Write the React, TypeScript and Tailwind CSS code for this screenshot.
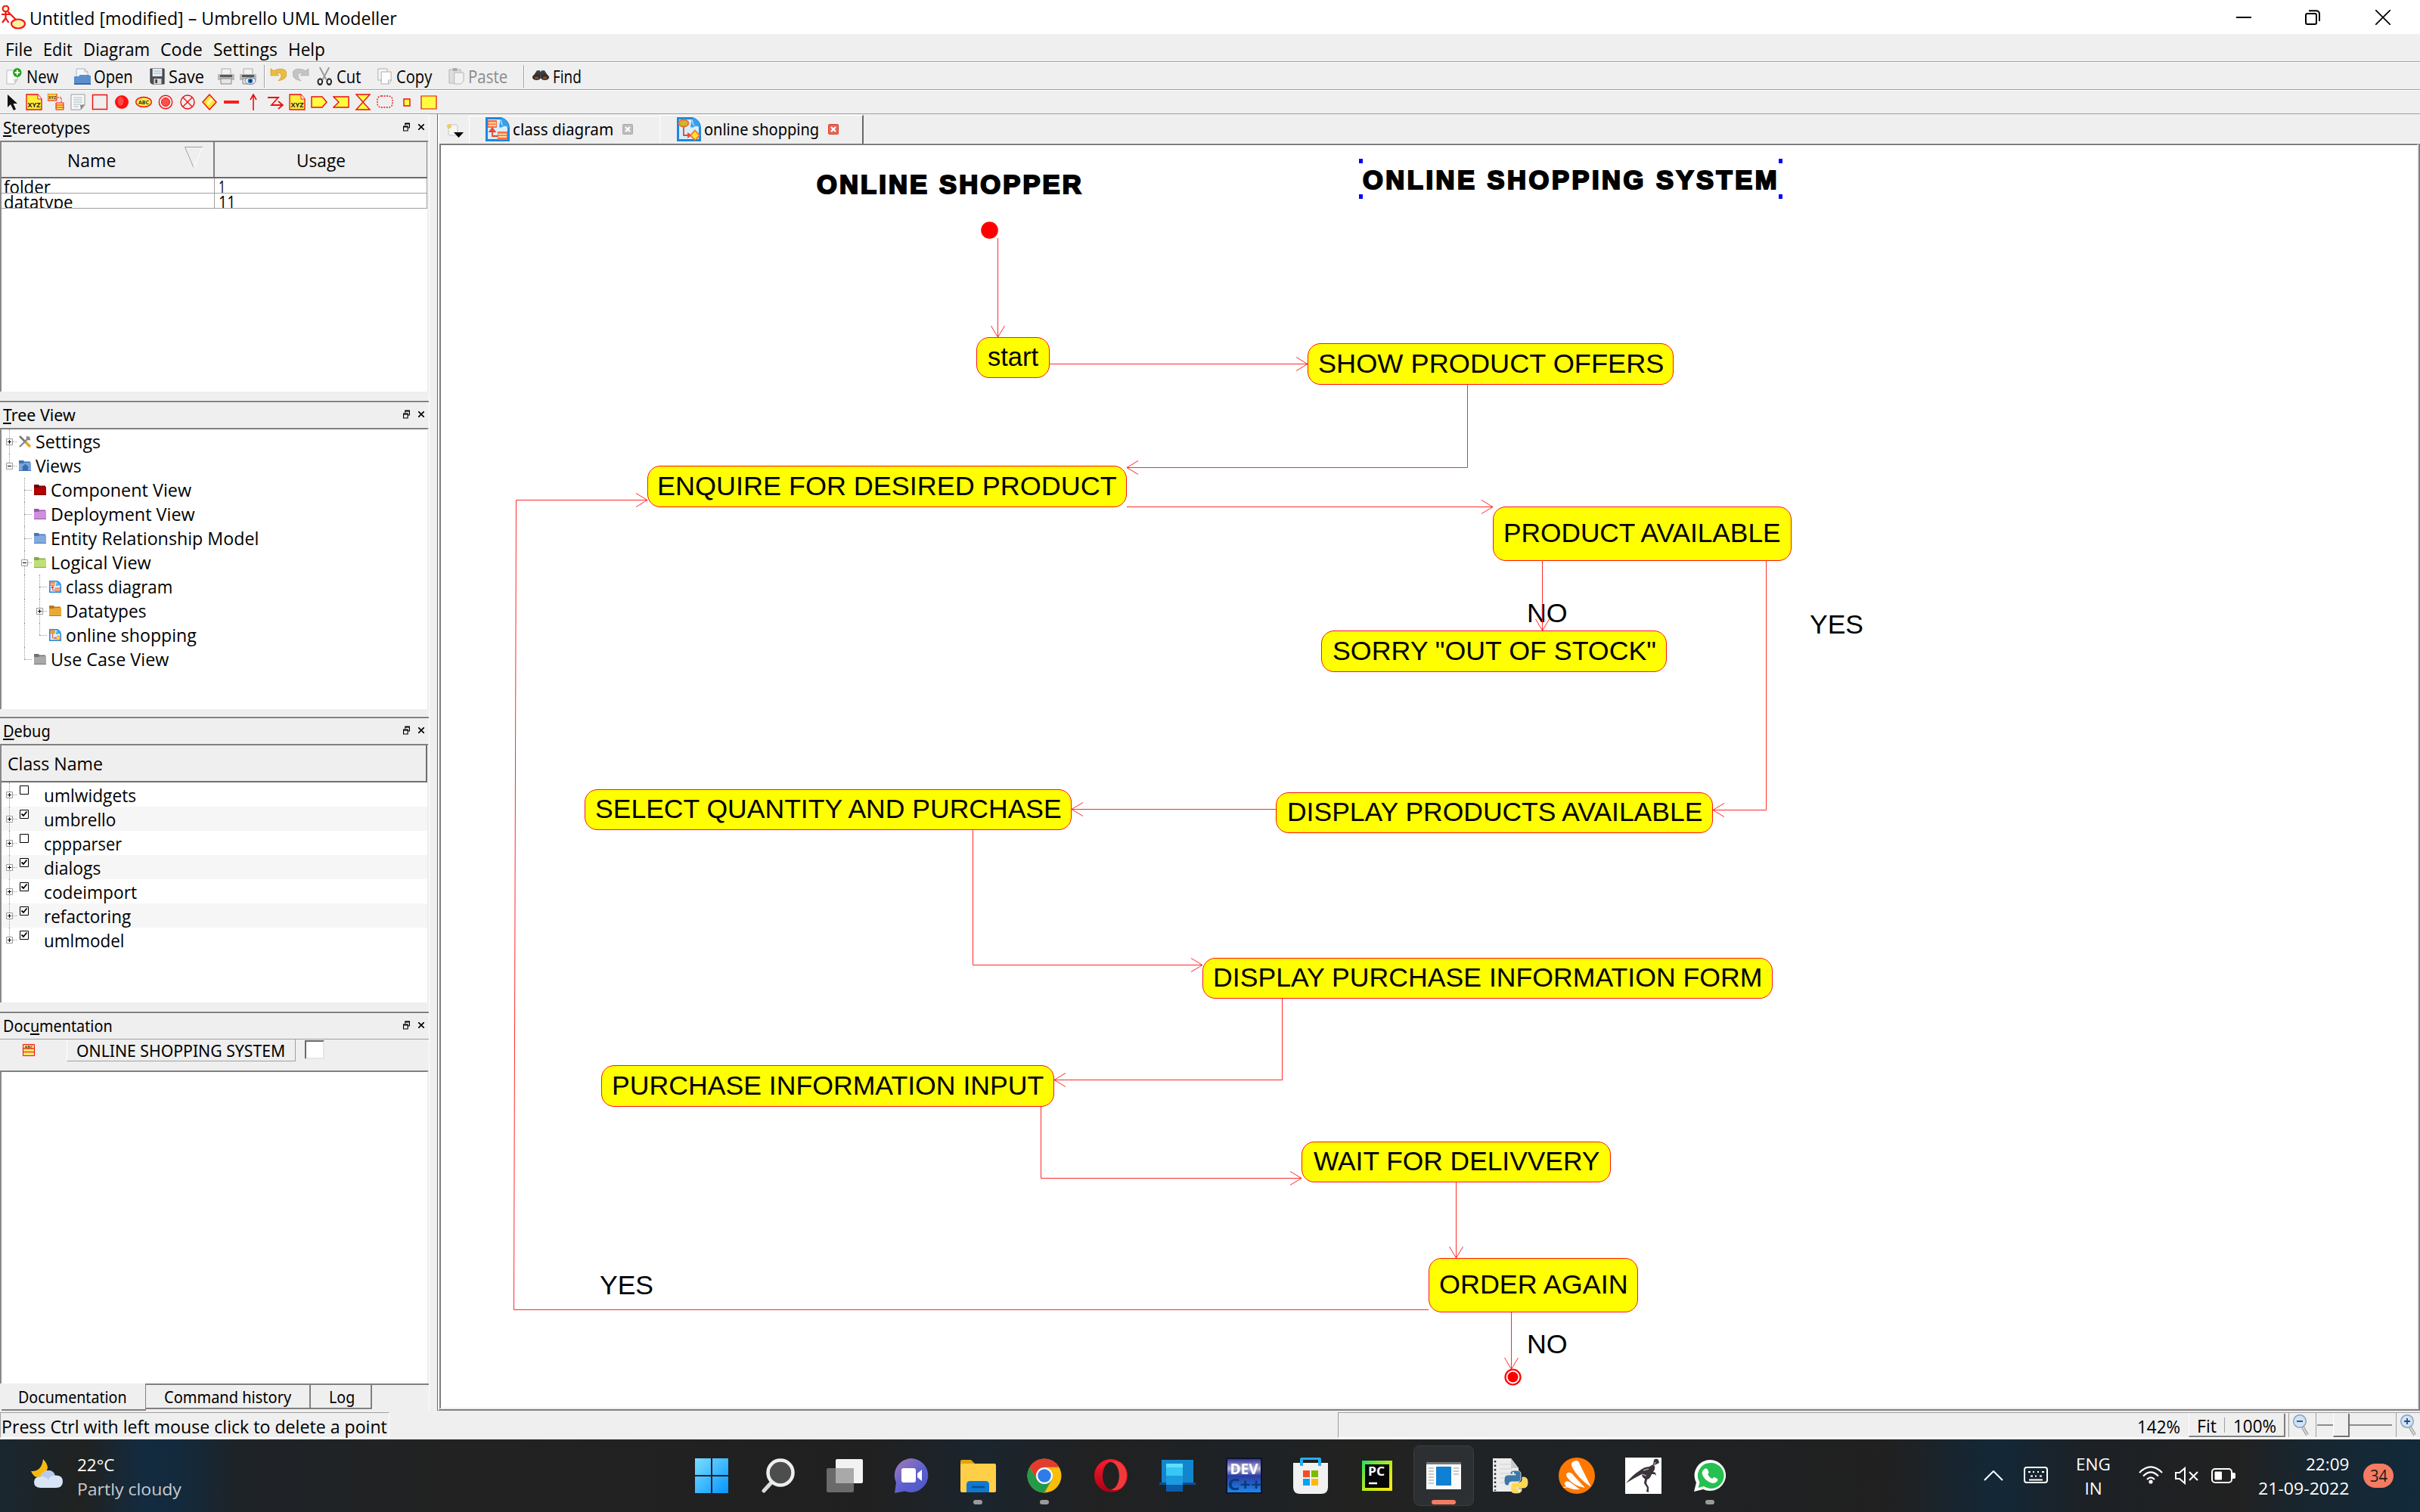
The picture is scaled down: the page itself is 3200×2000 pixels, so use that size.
import React, { useLayoutEffect, useRef, useState } from "react";

type Kids = { children?: React.ReactNode };

const UI = "font-['Open_Sans',sans-serif]";
const TAHOMA = "font-['Noto_Sans',sans-serif]";
const ARIAL = "font-['Liberation_Sans',Arial,sans-serif]";

/* A single line of text stretched or condensed to a given width. */
function T({ w, children, className = "", track = false }: { w: number; className?: string; track?: boolean } & Kids) {
  const ref = useRef<HTMLSpanElement>(null);
  const [fit, setFit] = useState<React.CSSProperties>({});
  useLayoutEffect(() => {
    const el = ref.current;
    if (!el) return;
    const natural = el.offsetWidth;
    const n = (el.textContent || "").length;
    setFit(track ? { letterSpacing: `${(w - natural) / (n - 1)}px` } : { transform: `scaleX(${w / natural})` });
  }, [w, track]);
  return (
    <span className={`relative top-px inline-block shrink-0 whitespace-nowrap ${className}`} style={{ width: w }}>
      <span ref={ref} className="inline-block origin-left" style={fit}>
        {children}
      </span>
    </span>
  );
}

function Svg({ vb = "0 0 22 22", className = "h-[22px] w-[22px]", children }: { vb?: string; className?: string } & Kids) {
  return (
    <svg viewBox={vb} preserveAspectRatio="none" className={`shrink-0 ${className}`} fill="none">
      {children}
    </svg>
  );
}

/* ---------- title, menu and tool bars ---------- */

function TitleBar() {
  return (
    <div className="flex h-[45px] items-center bg-white pl-[2px]">
      <Svg vb="0 0 32 32" className="h-8 w-8">
        <g stroke="#f01818" strokeWidth="2.2">
          <circle cx="5.5" cy="4.5" r="3.8" fill="#fff8c0" />
          <path d="M5.5 8.5v9M0 12h11M5.5 17L1 23M5.5 17l4 6M8 8l12 12" />
          <ellipse cx="22" cy="24.5" rx="9" ry="6" fill="#fff0a0" />
        </g>
      </Svg>
      <T w={486} className="ml-[5px] text-[24px]">Untitled [modified] – Umbrello UML Modeller</T>
      <div className="ml-auto mr-[39px] flex items-center">
        <div className="h-[2px] w-5 bg-black" />
        <Svg vb="0 0 20 20" className="ml-[71px] h-5 w-5">
          <rect x="1" y="5" width="14" height="14" rx="2" stroke="#000" strokeWidth="2" />
          <path d="M5 1.2h10a4 4 0 0 1 4 4V15" stroke="#000" strokeWidth="2" />
        </Svg>
        <Svg vb="0 0 20 20" className="ml-[73px] h-5 w-5">
          <path d="M0 0l20 20M20 0L0 20" stroke="#000" strokeWidth="1.7" />
        </Svg>
      </div>
    </div>
  );
}

function MenuBar() {
  return (
    <div className="flex h-[37px] items-center border-b border-[#a0a0a0] pl-[7px] pt-[2px] text-[24px]">
      <T w={36}>File</T>
      <T w={39} className="ml-[14px]">Edit</T>
      <T w={88} className="ml-[14px]">Diagram</T>
      <T w={56} className="ml-[14px]">Code</T>
      <T w={85} className="ml-[14px]">Settings</T>
      <T w={49} className="ml-[14px]">Help</T>
    </div>
  );
}

const Sep = ({ className = "" }) => <div className={`h-[30px] w-[2px] shrink-0 border-l border-r border-l-[#a0a0a0] border-r-white ${className}`} />;

function ToolBar() {
  return (
    <div className="flex h-[37px] items-center border-b border-t border-b-[#a0a0a0] border-t-white pl-2 text-[24px] [&>span]:top-0">
      <Svg className="h-[22px] w-[21px]">
        <path d="M1 3h15v12l-4 6H1z" fill="#fafafa" stroke="#bbb" />
        <path d="M16 14l-5 1 1 6z" fill="#ccc" />
        <circle cx="15.5" cy="6" r="6" fill="#22a31b" />
        <path d="M15.500 2.500v7M12 6h7" stroke="#fff" strokeWidth="2" />
      </Svg>
      <T w={42} className="ml-[6px]">New</T>
      <Svg className="ml-[21px] h-[22px] w-[22px]">
        <path d="M3 1h11l4 4v10H3z" fill="#f4f6fa" stroke="#a9b4c4" />
        <path d="M14 1v4h4" stroke="#a9b4c4" />
        <path d="M0 11h6l1.500-2H20v1h2v11H0z" fill="#5b8fcb" />
        <path d="M0 20h22v2H0z" fill="#3b6aa5" />
      </Svg>
      <T w={52} className="ml-1">Open</T>
      <Svg className="ml-[22px] h-[22px] w-5">
        <path d="M1 1h20v20H3l-2-2z" fill="#4c5057" stroke="#33363b" />
        <rect x="4" y="1" width="14" height="10" fill="#e4ecf2" />
        <path d="M6 4h10M6 7h10" stroke="#9fb0be" />
        <rect x="6" y="14" width="11" height="7" fill="#d9d9d9" />
        <rect x="8" y="15" width="3" height="5" fill="#444" />
      </Svg>
      <T w={47} className="ml-[5px]">Save</T>
      {[0, 1].map((i) => (
        <Svg key={i} className={i ? "ml-[7px] h-[22px] w-[22px]" : "ml-[18px] h-[22px] w-[22px]"}>
          <path d="M5 1h12v8H5z" fill="#f2f2f2" stroke="#aaa" />
          <path d="M0 9q0-1 1-1h20q1 0 1 1v7H0z" fill="#b9b9b9" />
          <path d="M3 10.500h16" stroke="#444" strokeWidth="2.400" />
          <path d="M4 14h14v7H4z" fill="#e6e6e6" stroke="#888" />
          {i === 1 && (
            <>
              <ellipse cx="14" cy="17" rx="7" ry="4.500" fill="#e9f1fa" stroke="#6b7f98" />
              <circle cx="14" cy="17" r="3.300" fill="#2f6db5" />
              <circle cx="14" cy="17" r="1.300" fill="#0a1c33" />
            </>
          )}
        </Svg>
      ))}
      <Sep className="ml-[10px]" />
      <Svg className="mb-1 ml-[6px] h-[18px] w-[22px]">
        <path d="M1 1v11h11L8 8.500q7-2 7 4 0 4-4 8 11-2 11-11 0-8-8-8-5 0-9 3z" fill="#ecbc3c" stroke="#c9991e" strokeWidth=".8" />
      </Svg>
      <Svg className="mb-1 ml-[8px] h-[18px] w-[22px]">
        <path d="M21 1v11H10l4-3.500q-7-2-7 4 0 4 4 8-11-2-11-11 0-8 8-8 5 0 9 3z" fill="#c4c4c4" stroke="#a9a9a9" strokeWidth=".8" />
      </Svg>
      <Svg className="ml-[10px] h-[24px] w-[21px]">
        <path d="M4 0l9 15M17 0L8 15" stroke="#9a9a9a" strokeWidth="2" />
        <ellipse cx="4.500" cy="17.500" rx="3" ry="3.500" stroke="#222" strokeWidth="2" />
        <ellipse cx="17" cy="17.500" rx="3" ry="3.500" stroke="#222" strokeWidth="2" />
      </Svg>
      <T w={32} className="ml-[5px]">Cut</T>
      <Svg className="ml-[22px] h-[22px] w-[19px]">
        <path d="M1 1h14v15H1z" fill="#f6f6f6" stroke="#aaa" />
        <path d="M6 5h15v12l-4 4H6z" fill="#fdfdfd" stroke="#aaa" />
        <path d="M21 16h-4v5" stroke="#aaa" />
      </Svg>
      <T w={47} className="ml-[6px]">Copy</T>
      <Svg className="ml-[22px] h-[22px] w-[21px]">
        <path d="M1 2h16v18H1z" fill="#dedede" stroke="#b5b5b5" />
        <path d="M6 0h6v4H6z" fill="#aaa" />
        <path d="M8 6h13v11l-4 4H8z" fill="#f2f2f2" stroke="#b5b5b5" />
      </Svg>
      <T w={52} className="ml-[5px] text-[#8b8b8b]">Paste</T>
      <Sep className="ml-[21px]" />
      <Svg className="mb-[2px] ml-[10px] h-[15px] w-[22px]">
        <path d="M1 13L6 2h4l1 3 1-3h4l5 11z" fill="#3c3c3c" />
        <circle cx="5.500" cy="15" r="5.500" fill="#2c2c2c" />
        <circle cx="16.500" cy="15" r="5.500" fill="#2c2c2c" />
        <circle cx="5.500" cy="16" r="2.800" fill="#8a4a2a" />
        <circle cx="16.500" cy="16" r="2.800" fill="#8a4a2a" />
      </Svg>
      <T w={38} className="ml-[5px]">Find</T>
    </div>
  );
}

const R = "#f00d0d";
const Xyz = () => (
  <>
    <path d="M1 1h15l5 6v14H1z" fill="#ffee3c" stroke={R} strokeWidth="1.300" />
    <path d="M16 1v6h5" fill="#fff" stroke={R} />
    <text x="11" y="18" textAnchor="middle" fontSize="9.500" fontWeight="700" fill="#222" textLength="17" lengthAdjust="spacingAndGlyphs" className={UI}>XYZ</text>
  </>
);

const umlTools: React.ReactNode[] = [
  <path d="M5 1v17l4-4 4 8 3-1.500L12.500 13H18z" fill="#111" />,
  <Xyz />,
  <>
    <path d="M0 0h12v9H0z" fill="#ffe52e" stroke={R} />
    <text x="6" y="7" textAnchor="middle" fontSize="6" fontWeight="700" fill="#333" textLength="10" lengthAdjust="spacingAndGlyphs">XYZ</text>
    <path d="M13 5h5v7" stroke={R} strokeDasharray="2 1" />
    <path d="M11 12h10v9H11zM11 15h10M11 18h10" fill="#ffee60" stroke={R} />
  </>,
  <>
    <path d="M2 1h18v14l-5 6H2z" fill="#fafafa" stroke="#999" />
    <path d="M5 5h12M5 8h12M5 11h12M5 14h10M5 17h7" stroke="#a8b2bd" />
    <path d="M20 14l-6 1 1 6z" fill="#888" />
  </>,
  <path d="M1.500 1.500h19v19h-19z" stroke={R} strokeWidth="1.400" />,
  <>
    <circle cx="11" cy="11" r="9" fill="#ff1010" />
    <ellipse cx="9.500" cy="10" rx="4" ry="6" fill="#ff8080" opacity=".5" />
  </>,
  <>
    <ellipse cx="11" cy="11" rx="10.300" ry="6.500" fill="#ffee40" stroke={R} strokeWidth="1.300" />
    <text x="11" y="14" textAnchor="middle" fontSize="7.500" fontWeight="700" fill="#333" textLength="14" lengthAdjust="spacingAndGlyphs">ABC</text>
  </>,
  <>
    <circle cx="11" cy="11" r="8.700" stroke={R} strokeWidth="1.400" />
    <circle cx="11" cy="11" r="5.500" fill="#ff5050" stroke={R} />
  </>,
  <>
    <circle cx="11" cy="11" r="9" stroke={R} strokeWidth="1.400" />
    <path d="M5 5l12 12M17 5L5 17" stroke={R} strokeWidth="1.400" />
  </>,
  <>
    <path d="M11 1l9 10-9 10-9-10z" fill="#ffe52e" stroke={R} strokeWidth="1.400" />
    <path d="M7 12l6-7 3 3-6 7z" fill="#fff8b0" />
  </>,
  <path d="M1 9h20v4H1z" fill="#ff1c1c" />,
  <path d="M11 22V2M7 8l4-7 4 7" stroke={R} strokeWidth="1.600" />,
  <path d="M1 5h14L6 15h14M15 10l6 5-6 5" stroke={R} strokeWidth="1.800" />,
  <Xyz />,
  <path d="M1 4h14l6 7-6 7H1z" fill="#ffff40" stroke={R} strokeWidth="1.400" />,
  <path d="M1 4h20v14H1l7-7z" fill="#ffff40" stroke={R} strokeWidth="1.400" />,
  <path d="M2 1h18L2 21h18z" fill="#ffff40" stroke={R} strokeWidth="1.400" />,
  <rect x="1" y="3" width="20" height="15" rx="5" stroke={R} strokeWidth="1.300" strokeDasharray="2 1.500" />,
  <path d="M7 7h8v9H7z" fill="#ffff40" stroke={R} strokeWidth="1.400" />,
  <path d="M1 3h20v17H1z" fill="#ffff40" stroke={R} strokeWidth="1.200" />,
];

function UmlToolBar() {
  return (
    <div className="flex h-8 items-center border-b border-t border-b-[#a0a0a0] border-t-white pl-[1px]">
      {umlTools.map((icon, i) => (
        <div key={i} className="flex w-[29px] justify-center">
          <Svg>{icon}</Svg>
        </div>
      ))}
    </div>
  );
}

/* ---------- left docks ---------- */

function DockTitle({ w, children }: { w: number } & Kids) {
  return (
    <div className={`flex h-[34px] items-center pl-1 pr-[6px] text-[22.500px] [&>span]:top-0 ${TAHOMA}`}>
      <T w={w}>{children}</T>
      <Svg vb="0 0 8 12" className="mb-[3px] ml-auto h-3 w-[9px]">
        <path d="M2.500 4V1h5v6H6M.5 5h5v6h-5zM.5 6h5M2.500 2h5" stroke="#000" />
      </Svg>
      <Svg vb="0 0 8 8" className="mb-[3px] ml-[11px] h-2 w-2">
        <path d="M0 0l8 8M8 0L0 8" stroke="#000" strokeWidth="1.600" />
      </Svg>
    </div>
  );
}

const frame = "border-l-2 border-t-2 border-r-2 border-l-[#8a8a8a] border-t-[#808080] border-r-[#ececec]";
const dockGap = "h-3 bg-[#efefef]";
const dockEdge = "h-[2px] border-b border-t border-t-[#a0a0a0] border-b-[#696969]";

function Stereotypes() {
  return (
    <>
      <DockTitle w={115}><u className="underline-offset-2">S</u>tereotypes</DockTitle>
      <div className={`h-[332px] bg-white text-[23px] ${frame} ${UI}`}>
        <div className="flex h-[48px] items-center border-b-2 border-[#6a6a6a] bg-[#efefef]">
          <div className="relative flex h-full w-[282px] items-center justify-center border-r-2 border-[#808080] pr-[42px]">
            <T w={64}>Name</T>
            <Svg vb="0 0 24 28" className="absolute right-[14px] top-[6px] h-7 w-6">
              <path d="M24 .5H.5L12 27.500" stroke="#a0a0a0" />
              <path d="M24 .5L12 27.500" stroke="#fff" />
            </Svg>
          </div>
          <div className="flex h-full flex-1 items-center justify-center border-r border-[#808080]">
            <T w={65}>Usage</T>
          </div>
        </div>
        {[["folder", 62, "1", 9], ["datatype", 92, "11", 22]].map(([a, aw, b, bw]) => (
          <div key={a as string} className="flex h-5 overflow-hidden border-b border-[#a0a0a0] leading-[20px]">
            <div className="h-5 w-[282px] overflow-hidden border-r border-[#a0a0a0] pl-[3px]"><T w={aw as number}>{a}</T></div>
            <div className="h-5 flex-1 overflow-hidden border-r border-[#a0a0a0] pl-[5px]"><T w={bw as number}>{b}</T></div>
          </div>
        ))}
      </div>
    </>
  );
}

const Expander = ({ open = false }) => (
  <Svg vb="0 0 9 9" className="relative h-[9px] w-[9px] bg-white">
    <path d="M.5.5h8v8h-8z" stroke="#9a9a9a" />
    <path d={open ? "M2 4.500h5" : "M2 4.500h5M4.500 2v5"} stroke="#000" />
  </Svg>
);

const Folder = ({ c, d, home = false }: { c: string; d: string; home?: boolean }) => (
  <Svg vb="0 0 16 16" className="h-4 w-4">
    <path d="M0 1h6l1 1.500h8V6H0z" fill={d} />
    <path d="M0 5h6l1-1h9v11H0z" fill={c} />
    <path d="M0 14.500h16" stroke={d} />
    {home && <path d="M8.500 5.500l-5 5H5v4h7v-4h1.500z" fill="#3a6dae" />}
  </Svg>
);

const DiagramDoc = ({ activity = false, className = "h-4 w-4" }) => (
  <Svg vb="0 0 32 32" className={className}>
    <path d="M1.500 1.500h19q9 3 10 12v17h-29z" fill="#d6effc" stroke="#1e88e0" strokeWidth="3" />
    <path d="M20 1q0 11 4 11-4 3-6 1M20 1q10 2 11 13-4-3-8-2z" fill="#3aa0ea" />
    {activity ? (
      <>
        <ellipse cx="9" cy="8" rx="6.500" ry="4.500" fill="#c9b92c" stroke="#f07030" strokeWidth="1.800" />
        <path d="M9 12.500V24h8M14 21l4 3-4 3" stroke="#f04030" strokeWidth="1.800" />
        <path d="M24 17.500l6 6.500-6 6.500-6-6.500z" fill="#ffe030" stroke="#f07030" strokeWidth="1.800" />
      </>
    ) : (
      <>
        <path d="M3 4h12v10H3zM16 19h13v11H16z" fill="#f2704a" />
        <path d="M4 7.500h10M4 11h10M17 22.500h11M17 26h11" stroke="#ffd9a0" strokeWidth="1.800" />
        <path d="M9 14v11h7M5.500 19L9 14.500l3.500 4.500z" stroke="#f04030" strokeWidth="1.800" />
      </>
    )}
  </Svg>
);

const Tools = () => (
  <Svg vb="0 0 16 16" className="h-4 w-4">
    <path d="M1 1l9 9" stroke="#777" strokeWidth="2.600" />
    <path d="M9 9l6 6" stroke="#e2a81c" strokeWidth="3.400" />
    <path d="M14 2L1 15M11 1v4h4" stroke="#8a8a8a" strokeWidth="2.400" />
  </Svg>
);

type Node = { label: string; w: number; level: number; icon: React.ReactNode; exp?: "open" | "closed"; guides: string[] };
const tree: Node[] = [
  { label: "Settings", w: 86, level: 0, icon: <Tools />, exp: "closed", guides: ["full"] },
  { label: "Views", w: 61, level: 0, icon: <Folder c="#7aa5dc" d="#3f74b5" home />, exp: "open", guides: ["end"] },
  { label: "Component View", w: 186, level: 1, icon: <Folder c="#b40000" d="#6d0000" />, guides: ["", "full"] },
  { label: "Deployment View", w: 191, level: 1, icon: <Folder c="#cf8fdc" d="#9a58a8" />, guides: ["", "full"] },
  { label: "Entity Relationship Model", w: 275, level: 1, icon: <Folder c="#82aadf" d="#4678b6" />, guides: ["", "full"] },
  { label: "Logical View", w: 133, level: 1, icon: <Folder c="#bfe075" d="#84a845" />, exp: "open", guides: ["", "full"] },
  { label: "class diagram", w: 141, level: 2, icon: <DiagramDoc />, guides: ["", "full", "full"] },
  { label: "Datatypes", w: 106, level: 2, icon: <Folder c="#e9aa35" d="#b87a18" />, exp: "closed", guides: ["", "full", "full"] },
  { label: "online shopping", w: 173, level: 2, icon: <DiagramDoc activity />, guides: ["", "full", "end"] },
  { label: "Use Case View", w: 156, level: 1, icon: <Folder c="#a9a9a9" d="#707070" />, guides: ["", "end"] },
];

function Guide({ kind, last, exp }: { kind: string; last: boolean; exp?: string }) {
  return (
    <div className="relative flex h-full w-5 shrink-0 items-center justify-center">
      {kind && <div className={`absolute left-[10px] top-0 border-l border-dotted border-[#999] ${kind === "end" ? "h-4" : "h-full"}`} />}
      {last && <div className="absolute left-[10px] top-4 w-[10px] border-t border-dotted border-[#999]" />}
      {last && exp && <Expander open={exp === "open"} />}
    </div>
  );
}

function TreeView() {
  return (
    <>
      <DockTitle w={96}><u className="underline-offset-2">T</u>ree View</DockTitle>
      <div className={`h-[372px] bg-white text-[23.500px] ${frame} ${UI}`}>
        {tree.map((n) => (
          <div key={n.label} className="flex h-8 items-center">
            {n.guides.map((g, i) => (
              <Guide key={i} kind={g} last={i === n.level} exp={n.exp} />
            ))}
            <div className="ml-[3px] flex h-4">{n.icon}</div>
            <T w={n.w} className="ml-[6px]">{n.label}</T>
          </div>
        ))}
      </div>
    </>
  );
}

const classes: [string, number, boolean][] = [
  ["umlwidgets", 122, false],
  ["umbrello", 95, true],
  ["cppparser", 103, false],
  ["dialogs", 75, true],
  ["codeimport", 123, true],
  ["refactoring", 115, true],
  ["umlmodel", 107, true],
];

function Debug() {
  return (
    <>
      <DockTitle w={63}><u className="underline-offset-2">D</u>ebug</DockTitle>
      <div className={`h-[342px] bg-white text-[23.500px] ${frame} ${UI}`}>
        <div className="flex h-[49px] items-center border-b-2 border-r-2 border-[#707070] bg-[#efefef] pl-2 pt-px">
          <T w={126}>Class Name</T>
        </div>
        {classes.map(([name, w, on], i) => (
          <div key={name} className={`flex h-8 items-center ${i % 2 ? "bg-[#f6f6f6]" : ""}`}>
            <Guide kind={i === classes.length - 1 ? "end" : "full"} last exp="closed" />
            <Svg vb="0 0 12 12" className="mb-3 ml-1 h-3 w-3 bg-white">
              <path d="M.5.5h11v11H.5z" stroke="#000" />
              {on && <path d="M2.500 5.500L5 8l4.500-5.500" stroke="#000" strokeWidth="1.800" />}
            </Svg>
            <T w={w} className="ml-5 mt-[2px]">{name}</T>
          </div>
        ))}
      </div>
    </>
  );
}

function Documentation() {
  return (
    <>
      <DockTitle w={145}>Doc<u className="underline-offset-2">u</u>mentation</DockTitle>
      <div className={`flex h-[42px] items-start border-t border-[#a0a0a0] pl-[30px] text-[22.500px] ${TAHOMA}`}>
        <Svg vb="0 0 16 16" className="mt-[6px] h-4 w-4">
          <path d="M.5.5h15v15H.5z" fill="#ffe36a" stroke={R} />
          <text x="8" y="5.500" fontSize="5.500" textAnchor="middle" fontWeight="700" fill="#444">ABC</text>
          <path d="M0 6h16M0 10.500h16" stroke={R} />
        </Svg>
        <div className="ml-[42px] flex h-[29px] w-[303px] items-center border-b border-l border-r border-[#a0a0a0] border-l-white pl-[12px]">
          <T w={276}>ONLINE SHOPPING SYSTEM</T>
        </div>
        <div className="ml-3 mt-[1px] h-[25px] w-[26px] border-2 border-b-[#e6e6e6] border-l-[#696969] border-r-[#e6e6e6] border-t-[#696969] bg-white" />
      </div>
      <div className={`h-[414px] bg-white ${frame}`} />
      <div className={`flex h-[36px] items-start text-[22.500px] ${TAHOMA}`}>
        <div className="ml-[2px] flex h-[36px] w-[191px] items-center border-b-2 border-r border-[#808080] pl-[22px]">
          <T w={144}>Documentation</T>
        </div>
        <div className="flex h-[34px] w-[218px] items-center border-b-2 border-r-2 border-t-2 border-[#808080] pl-[24px]">
          <T w={168}>Command history</T>
        </div>
        <div className="flex h-[34px] w-[81px] items-center border-b-2 border-r-2 border-t-2 border-[#808080] pl-[24px]">
          <T w={34}>Log</T>
        </div>
        <div className="h-[2px] flex-1 bg-[#808080]" />
      </div>
    </>
  );
}

/* ---------- diagram ---------- */

type Box = [string, number, number, number, number, number];
const boxes: Box[] = [
  ["start", 1291, 446, 97, 54, 67],
  ["SHOW PRODUCT OFFERS", 1729, 454, 484, 55, 457],
  ["ENQUIRE FOR DESIRED PRODUCT", 856, 616, 634, 55, 608],
  ["PRODUCT AVAILABLE", 1974, 670, 395, 72, 367],
  ['SORRY "OUT OF STOCK"', 1747, 834, 457, 55, 428],
  ["SELECT QUANTITY AND PURCHASE", 773, 1044, 644, 54, 617],
  ["DISPLAY PRODUCTS AVAILABLE", 1687, 1048, 578, 54, 549],
  ["DISPLAY PURCHASE INFORMATION FORM", 1590, 1267, 754, 54, 727],
  ["PURCHASE INFORMATION INPUT", 795, 1409, 599, 55, 571],
  ["WAIT FOR DELIVVERY", 1721, 1510, 409, 54, 378],
  ["ORDER AGAIN", 1889, 1664, 277, 72, 250],
];

const labels: [string, number, number, number][] = [
  ["NO", 2019, 810, 54],
  ["YES", 2393, 825, 71],
  ["YES", 793, 1699, 71],
  ["NO", 2019, 1777, 54],
];

const edges = [
  "M1319.500 315V446", "M1387 481.500H1729", "M1940.500 509V618.500H1490", "M1490 670.500H1974",
  "M2039.500 741V834", "M2335.500 741V1071.500H2265", "M1687 1070.500H1417", "M1286.500 1098V1276.500H1590",
  "M1695.500 1321V1428.500H1394", "M1376.500 1464V1558.500H1721", "M1925.500 1564V1664",
  "M1998.500 1736V1811", "M1889 1732.500H679.500L682.500 661.500H856",
];
const heads: [number, number, string][] = [
  [1319.5, 446, "d"], [1729, 481.5, "r"], [1490, 618.5, "l"], [1974, 670.5, "r"], [2039.5, 834, "d"],
  [2265, 1071.5, "l"], [1417, 1070.5, "l"], [1590, 1276.5, "r"], [1394, 1428.5, "l"], [1721, 1558.5, "r"],
  [1925.5, 1664, "d"], [1998.5, 1811, "d"], [856, 661.5, "r"],
];
const headPath: Record<string, string> = { d: "l-9-15m9 15l9-15", r: "l-15-9m15 9l-15 9", l: "l15-9m-15 9l15 9" };

function Diagram() {
  return (
    <div className={`absolute -left-[583px] -top-[192px] h-[2000px] w-[3200px] text-[34.500px] leading-[40px] ${ARIAL}`}>
      {boxes.map(([text, x, y, w, h, tw]) => (
        <div
          key={text}
          className="absolute flex items-center justify-center rounded-[17px] border border-[#ff1414] bg-[#ffff00] pb-1"
          style={{ left: x, top: y, width: w, height: h }}
        >
          <T w={tw}>{text}</T>
        </div>
      ))}
      {labels.map(([text, x, y, w]) => (
        <div key={text + x + y} className="absolute flex -translate-y-1/2" style={{ left: x, top: y }}>
          <T w={w}>{text}</T>
        </div>
      ))}
      <div className="absolute left-[1080px] top-[223px] flex font-bold [-webkit-text-stroke:2.200px_#000]"><T w={350} track>ONLINE SHOPPER</T></div>
      <div className="absolute left-[1802px] top-[217px] flex font-bold [-webkit-text-stroke:2.200px_#000]"><T w={547} track>ONLINE SHOPPING SYSTEM</T></div>
      <svg className="absolute inset-0" width="3200" height="2000" fill="none" stroke="#ff2a2a" strokeWidth="1">
        {edges.map((d) => <path key={d} d={d} />)}
        {heads.map(([x, y, k]) => <path key={`${x}-${y}`} d={`M${x} ${y}${headPath[k]}`} />)}
        <circle cx="1308.500" cy="304.500" r="11.300" fill="#ff0000" stroke="none" />
        <circle cx="2000.500" cy="1821.500" r="10" stroke="#ff0000" strokeWidth="2.200" />
        <circle cx="2000.500" cy="1821.500" r="7" fill="#ff0000" stroke="none" />
        <path d="M1797 210h5v6h-5zM2352 210h5v6h-5zM1797 257h5v6h-5zM2352 257h5v6h-5z" fill="#0000ff" stroke="none" />
      </svg>
    </div>
  );
}

const CloseBox = ({ active = false, className = "" }) => (
  <Svg vb="0 0 14 14" className={`h-[14px] w-[14px] ${className}`}>
    <rect width="14" height="14" rx="2" fill={active ? "#d9442f" : "#a9a9a9"} />
    <rect x="1" y="1" width="12" height="12" rx="1" fill={active ? "#e2695a" : "#bdbdbd"} />
    <path d="M4 4l6 6M10 4l-6 6" stroke="#fff" strokeWidth="2.200" />
  </Svg>
);

function Editor() {
  return (
    <div className="flex min-w-0 flex-1 flex-col border-l border-[#696969]">
      <div className={`flex h-[39px] shrink-0 items-end border-l-2 border-white text-[22.500px] ${TAHOMA}`}>
        <Svg vb="0 0 24 20" className="mb-[7px] ml-[9px] h-5 w-6">
          <rect x="3" y="2" width="12" height="14" rx="2" fill="#f6f6f6" stroke="#c4c4c4" />
          <circle cx="4" cy="4" r="3" fill="#f0cc60" />
          <path d="M10 12h13l-6.500 7z" fill="#000" />
        </Svg>
        <div className="ml-[6px] flex h-[37px] w-[252px] items-center border-l border-t border-white pb-[2px] pl-[21px] [&>span]:top-0">
          <DiagramDoc className="h-8 w-8" />
          <T w={133} className="ml-1">class diagram</T>
          <CloseBox className="ml-3" />
        </div>
        <div className="flex h-[38px] w-[270px] items-center border-l border-r-2 border-t border-white border-r-[#696969] pb-[2px] pl-[22px] [&>span]:top-0">
          <DiagramDoc activity className="h-8 w-8" />
          <T w={152} className="ml-1">online shopping</T>
          <CloseBox active className="ml-3" />
        </div>
        <div className="h-[1px] flex-1 bg-white" />
      </div>
      <div className="flex min-h-0 flex-1 border-b-2 border-l-2 border-r-2 border-white border-b-[#808080] border-r-[#808080]">
        <div className="relative flex-1 overflow-hidden border-2 border-b-[#efefef] border-l-[#7c7c7c] border-r-[#efefef] border-t-[#7c7c7c] bg-white">
          <Diagram />
        </div>
      </div>
    </div>
  );
}

/* ---------- status bar ---------- */

const Zoom = ({ plus = false }) => (
  <Svg vb="0 0 24 28" className="h-7 w-6">
    <path d="M14 17l6 10" stroke="#8f8f8f" strokeWidth="4" />
    <path d="M14 17l6 10" stroke="#dedede" strokeWidth="2" />
    <circle cx="10" cy="9" r="8.300" fill="#cfe2f7" stroke="#8ea3bb" strokeWidth="1.500" />
    <path d={plus ? "M6 9h8M10 5v8" : "M6 9h8"} stroke="#234a80" strokeWidth="1.800" />
  </Svg>
);

function StatusBar() {
  return (
    <div className="flex h-[38px] items-center text-[24px]">
      <div className="flex h-[34px] w-[515px] items-center border border-[#a0a0a0] border-b-white border-r-white pl-px pt-[2px]">
        <T w={510}>Press Ctrl with left mouse click to delete a point</T>
      </div>
      <div className="ml-[1254px] flex h-[34px] flex-1 items-center border border-b-white border-l-[#a0a0a0] border-r-0 border-t-[#a0a0a0]">
        <T w={57} className="ml-[1056px] mt-[2px]">142%</T>
        <div className="ml-[11px] flex h-[31px] w-[128px] items-center border-b-2 border-l border-r-2 border-[#808080] border-l-white pl-[10px] pt-[2px]">
          <T w={26}>Fit</T>
          <div className="ml-[10px] h-5 w-px bg-[#a0a0a0]" />
          <T w={57} className="ml-[11px]">100%</T>
        </div>
        <div className="ml-1 flex h-full w-[33px] items-center justify-center border-l border-[#a0a0a0]"><Zoom /></div>
        <div className="ml-[3px] flex h-full w-[102px] items-center border-l border-[#a0a0a0] pl-[1px]">
          <div className="h-[2px] w-[21px] bg-[#8c8c8c]" />
          <div className="h-[31px] w-[22px] border-b-2 border-l border-r-2 border-[#707070] border-l-white" />
          <div className="h-[2px] w-14 bg-[#8c8c8c]" />
        </div>
        <div className="ml-1 flex h-full w-8 items-center border-l border-[#a0a0a0] pl-[4px]"><Zoom plus /></div>
      </div>
    </div>
  );
}

/* ---------- taskbar ---------- */

const big = "h-[48px] w-[48px]";
const apps: React.ReactNode[] = [
  <Svg vb="0 0 48 48" className={big}>
    <defs>
      <linearGradient id="win" x1="0" y1="0" x2="48" y2="48" gradientUnits="userSpaceOnUse"><stop stopColor="#7fe0ff" /><stop offset="1" stopColor="#0093ff" /></linearGradient>
    </defs>
    <path d="M2 1h21v22H2zM25 1h21v22H25zM2 25h21v22H2zM25 25h21v22H25z" fill="url(#win)" />
  </Svg>,
  <Svg vb="0 0 48 48" className={big}>
    <path d="M16 32L5 44" stroke="#d8dcdf" strokeWidth="5" strokeLinecap="round" />
    <circle cx="27" cy="20" r="16.500" fill="#4d4d4d" stroke="#eceeef" strokeWidth="4.500" />
  </Svg>,
  <Svg vb="0 0 48 48" className={big}>
    <rect x="12" y="2" width="36" height="32" rx="2" fill="#f2f2f2" />
    <rect x="0" y="14" width="36" height="32" rx="2" fill="#6a6a6a" />
    <path d="M12 14h22q2 0 2 2v18H12z" fill="#a9a9a9" />
  </Svg>,
  <Svg vb="0 0 48 48" className={big}>
    <defs>
      <linearGradient id="chat" x1="6" y1="4" x2="40" y2="44" gradientUnits="userSpaceOnUse"><stop stopColor="#9a78b8" /><stop offset=".6" stopColor="#5b5fd0" /><stop offset="1" stopColor="#5257c8" /></linearGradient>
    </defs>
    <path d="M24 1a23 22.500 0 1 1-9 43.500L2 47l2-14A23 22.500 0 0 1 24 1z" fill="url(#chat)" />
    <rect x="11" y="14" width="19" height="19" rx="3" fill="#fff" />
    <path d="M32 21l6-5v15l-6-5z" fill="#fff" />
  </Svg>,
  <Svg vb="0 0 48 48" className={big}>
    <path d="M1 5q0-2 2-2h12l5 5v4H1z" fill="#e0a30c" />
    <rect x="1" y="8" width="47" height="38" rx="2" fill="#ffcf48" />
    <path d="M9 46V36q0-5 5-5h20q5 0 5 5v10z" fill="#0f78d0" />
    <path d="M16 39h17" stroke="#0a4c92" strokeWidth="2.500" />
  </Svg>,
  <Svg vb="0 0 48 48" className={big}>
    <circle cx="24" cy="24" r="22.500" fill="#fbbd0b" />
    <path d="M24 12.800H43.500A22.500 22.500 0 0 0 4.500 12.800L14 29z" fill="#e33b2e" />
    <path d="M4.500 12.800A22.500 22.500 0 0 0 24 46.500L34 29 14 29z" fill="#25994a" />
    <circle cx="24" cy="24" r="11" fill="#fff" />
    <circle cx="24" cy="24" r="8.800" fill="#2f7bea" />
  </Svg>,
  <Svg vb="0 0 48 48" className={big}>
    <defs>
      <linearGradient id="opera" x1="0" y1="0" x2="0" y2="1"><stop stopColor="#ff1b2d" /><stop offset="1" stopColor="#a70014" /></linearGradient>
    </defs>
    <path fillRule="evenodd" d="M24 2a22 22 0 1 0 0 44 22 22 0 1 0 0-44zm0 4c6 0 11 8 11 18s-5 18-11 18-11-8-11-18S18 6 24 6z" fill="url(#opera)" />
    <path d="M24 6c4-2 10-1 14 2a22 22 0 0 1 0 32c-5 4-10 4-14 2 6 0 11-8 11-18S30 6 24 6z" fill="#f23a3a" />
  </Svg>,
  <Svg vb="0 0 48 48" className={big}>
    <path d="M3 3h42v31H3z" fill="#1285cf" />
    <path d="M0 33h48v3H0z" fill="#0d4f90" />
    <rect x="9" y="8" width="22" height="37" rx="2" fill="#1b9ae0" />
    <path d="M9 10q0-2 2-2h18q2 0 2 2v14H9z" fill="#38c6f4" />
    <path d="M9 8h22v5H9z" fill="#5ee0fa" />
    <path d="M9 36h22v9H9z" fill="#0b5cac" />
  </Svg>,
  <Svg vb="0 0 48 48" className={big}>
    <defs>
      <linearGradient id="dev" x1="0" y1="0" x2="0" y2="1"><stop stopColor="#2a2a90" /><stop offset=".3" stopColor="#b9b9dc" /><stop offset=".5" stopColor="#2a3aa0" /><stop offset="1" stopColor="#1b8cf0" /></linearGradient>
    </defs>
    <path d="M1 1h46v46H1z" fill="url(#dev)" stroke="#0c1430" strokeWidth="2" />
    <text x="24" y="22" textAnchor="middle" fontSize="19" fontWeight="700" fill="#fff" textLength="37" lengthAdjust="spacingAndGlyphs" className={UI}>DEV</text>
    <text x="25" y="43" textAnchor="middle" fontSize="21" fontWeight="700" fill="#0a3a7c" textLength="45" lengthAdjust="spacingAndGlyphs" className={UI}>C++</text>
  </Svg>,
  <Svg vb="0 0 48 48" className={big}>
    <path d="M12 11V3q0-2 2-2h20q2 0 2 2v8" stroke="#23b0f0" strokeWidth="4" />
    <path d="M1 7h46v32q0 9-9 9H10q-9 0-9-9z" fill="#f1f1f1" />
    <path d="M12 11V7M36 11V7" stroke="#23b0f0" strokeWidth="4" />
    <path d="M14 17h9v9h-9z" fill="#f25022" />
    <path d="M25 17h9v9h-9z" fill="#7fba00" />
    <path d="M14 28h9v9h-9z" fill="#00a4ef" />
    <path d="M25 28h9v9h-9z" fill="#ffb900" />
  </Svg>,
  <Svg vb="0 0 48 48" className={big}>
    <defs>
      <linearGradient id="pc" x1="0" y1="0" x2="1" y2="1"><stop stopColor="#1fe060" /><stop offset=".5" stopColor="#b8ea20" /><stop offset="1" stopColor="#ffe818" /></linearGradient>
    </defs>
    <path d="M4 4h40v40H4z" fill="url(#pc)" />
    <path d="M8 9h32v31H8z" fill="#060606" />
    <text x="12" y="24" fontSize="16" fontWeight="700" fill="#fff" textLength="22" lengthAdjust="spacingAndGlyphs" className={UI}>PC</text>
    <path d="M13 34h11" stroke="#fff" strokeWidth="2.500" />
  </Svg>,
  <Svg vb="0 0 48 48" className={big}>
    <path d="M1 7h46v35H1z" fill="#fafafa" />
    <path d="M1 6h46v3H1z" fill="#777" />
    <path d="M14 12h20v25H14z" fill="#0f80d4" />
    <path d="M4 14h7M4 18h7M4 22h7M4 26h7M4 30h7M4 34h7M37 14h7M37 18h7M37 22h7" stroke="#999" strokeWidth="1.200" />
  </Svg>,
  <Svg vb="0 0 48 48" className={big}>
    <path d="M1 1h24l10 13v31H1z" fill="#ececec" />
    <path d="M25 1v13h10z" fill="#c9c9c9" />
    <path d="M4 4v40" stroke="#333" strokeWidth="2.500" strokeDasharray="2.500 3" />
    <path d="M10 9h14M10 15h16M10 21h16M10 27h10M10 33h8" stroke="#cfcfcf" />
    <path d="M24 22v-1q0-4 7-4t7 4v7q0 4-4 4h-8q-4 0-4 5h-2q-4 0-4-7 0-7 5-7h10v-1z" fill="#3b77a8" stroke="#ececec" strokeWidth=".8" />
    <path d="M40 26h2q5 0 5 7 0 7-5 7H32v1h7v2q0 4-7 4t-7-4v-6q0-4 4-4h7q4 0 4-4z" fill="#ffd94a" stroke="#ececec" strokeWidth=".8" />
    <circle cx="28" cy="20.500" r="1.300" fill="#fff" />
    <circle cx="36" cy="44" r="1.300" fill="#fff" />
  </Svg>,
  <Svg vb="0 0 48 48" className={big}>
    <circle cx="24" cy="24" r="24" fill="#ff7800" />
    <path d="M20 5q6-3 8 4l15 30Q26 28 18 13q-3-6 2-8zM12 20q5-1 8 4l15 16Q20 38 12 27q-4-5 0-7zM9 32q4-2 8 2l11 8q-12 1-18-4-4-4-1-6zM5 39q5-1 9 0l-6 1z" fill="#fff" />
  </Svg>,
  <Svg vb="0 0 48 48" className={big}>
    <path d="M0 0h48v48H0z" fill="#fff" />
    <path d="M38 3q3-3 6 0l1 4-4 2-2 1q1 6-2 9l3 1 1 4-2-2-4 0q-2 6-6 7l-1 5 3 5v7l-3-1 1-5-4-6 1-6q-4-2-4-6Q12 27 1 34q9-11 17-16 7-6 14-6l5-3z" fill="#3a333b" />
    <path d="M24 17l7-2M22 22l6 2M40 6l-2 5" stroke="#a9a" strokeWidth="1.500" />
  </Svg>,
  <Svg vb="0 0 48 48" className={big}>
    <path d="M24 3a21 20.500 0 1 1-9 39L3 45l3-12A21 20.500 0 0 1 24 3z" fill="#fff" />
    <path d="M24.500 7a17 17 0 1 1-8.500 31l-7.500 2 2-7A17 17 0 0 1 24.500 7z" fill="#25c050" />
    <path d="M17 15q3-2 4 1l1.500 3q.5 1.500-1.500 3 2 4 6 6 2-2.500 3-2l4 2q1 1 0 3-3 4-8 2.500-9-3-12-11-1.500-4 3-7.500z" fill="#fff" />
  </Svg>,
];

function TaskBar() {
  return (
    <div className="flex h-24 bg-[linear-gradient(90deg,#1a2730_0px,#202220_110px,#132b40_190px,#132a3c_240px,#1e2328_310px,#222222_600px,#202020_1150px,#1b252e_1300px,#212121_1450px,#1d2226_1640px,#222220_1800px,#1f2326_2000px,#202020_2500px,#132838_2640px,#1c2126_2750px,#212121_2960px,#182630_3050px,#122a3a_3200px)] text-[22.500px] text-white">
      <div className="flex w-[896px] items-center pl-10 pt-px">
        <Svg vb="0 0 44 40" className="mb-2 h-10 w-11">
          <path d="M17 1q6 6 6 12-4 12-14 12Q4 24 1 17q14 1 16-16z" fill="#f8b913" />
          <path d="M14 39q-9 0-9-7.500T14 24q2-8 10-8 7 0 8.500 6.500Q43 22 43 30.500T34 39z" fill="#d9e5f6" />
          <path d="M24 16q7 0 8.500 6.500-7 .5-8.500 6-3-5-10-4.500 2-8 10-8z" fill="#b7cbee" />
        </Svg>
        <div className="ml-[18px] flex flex-col leading-8">
          <T w={50}>22°C</T>
          <T w={138} className="text-[#c9ccce]">Partly cloudy</T>
        </div>
      </div>
      {apps.map((icon, i) => (
        <div key={i} className="flex w-[88px] items-center justify-center">
          <div className={`relative left-px flex h-20 w-20 items-center justify-center rounded-lg ${i === 11 ? "border border-[#3b3d3f] bg-[#2d3033]" : ""}`}>
            {icon}
            {(i === 4 || i === 5 || i === 15) && <div className="absolute bottom-[2px] h-[6px] w-3 rounded-full bg-[#9a9a9a]" />}
            {i === 11 && <div className="absolute bottom-[1px] h-[6px] w-8 rounded-full bg-[#f47c63]" />}
          </div>
        </div>
      ))}
      <div className="flex flex-1 items-center pl-[319px]">
        <Svg vb="0 0 26 14" className="h-[14px] w-[26px]"><path d="M1 13L13 1l12 12" stroke="#fff" strokeWidth="2" /></Svg>
        <Svg vb="0 0 32 22" className="mb-[2px] ml-[27px] h-[22px] w-8">
          <rect x="1" y="1" width="30" height="20" rx="3" stroke="#fff" strokeWidth="2" />
          <path d="M6 7h3M12 7h2M18 7h2M24 7h3M9 12.500h3M15 12.500h2M21 12.500h3M7 17.500h18" stroke="#fff" strokeWidth="2" />
        </Svg>
        <div className="ml-[37px] flex w-[46px] flex-col items-center leading-8"><T w={46}>ENG</T><T w={23}>IN</T></div>
        <Svg vb="0 0 32 24" className="mb-[2px] ml-[37px] h-6 w-8">
          <path d="M1 9q15-15 30 0M6 13.500q10-10 20 0M11 18q5-5 10 0" stroke="#fff" strokeWidth="2.200" />
          <circle cx="16" cy="21" r="2.600" fill="#fff" />
        </Svg>
        <Svg vb="0 0 31 24" className="ml-4 h-6 w-[31px]">
          <path d="M1 8h5l7-6v20l-7-6H1zM19 7l11 11M30 7L19 18" stroke="#fff" strokeWidth="2" />
        </Svg>
        <Svg vb="0 0 32 20" className="ml-[17px] h-5 w-8">
          <rect x="1" y="1" width="26" height="18" rx="4" stroke="#fff" strokeWidth="2" />
          <rect x="4.500" y="4.500" width="9.500" height="11" rx="1" fill="#fff" />
          <path d="M28 6h2q2 0 2 2v4q0 2-2 2h-2z" fill="#fff" />
        </Svg>
        <div className="ml-[30px] flex w-[120px] flex-col items-end leading-8"><T w={57}>22:09</T><T w={120}>21-09-2022</T></div>
        <div className="ml-[19px] flex h-8 w-10 items-center justify-center rounded-[16px] bg-[#f47c63] text-[#1a1a1a]"><T w={23} className="text-[21px]">34</T></div>
      </div>
    </div>
  );
}

export default function App() {
  return (
    <div className={`flex h-[2000px] w-[3200px] flex-col overflow-hidden bg-[#efefef] text-black ${UI}`}>
      <TitleBar />
      <MenuBar />
      <ToolBar />
      <UmlToolBar />
      <div className="flex min-h-0 flex-1">
        <div className="flex w-[567px] flex-col border-t border-white [&>*]:shrink-0">
          <Stereotypes />
          <div className={dockGap} />
          <div className={dockEdge} />
          <TreeView />
          <div className="h-[10px] bg-[#efefef]" />
          <div className={dockEdge} />
          <Debug />
          <div className={dockGap} />
          <div className={dockEdge} />
          <Documentation />
        </div>
        <div className="w-[11px] border-l border-white" />
        <Editor />
      </div>
      <StatusBar />
      <TaskBar />
    </div>
  );
}
